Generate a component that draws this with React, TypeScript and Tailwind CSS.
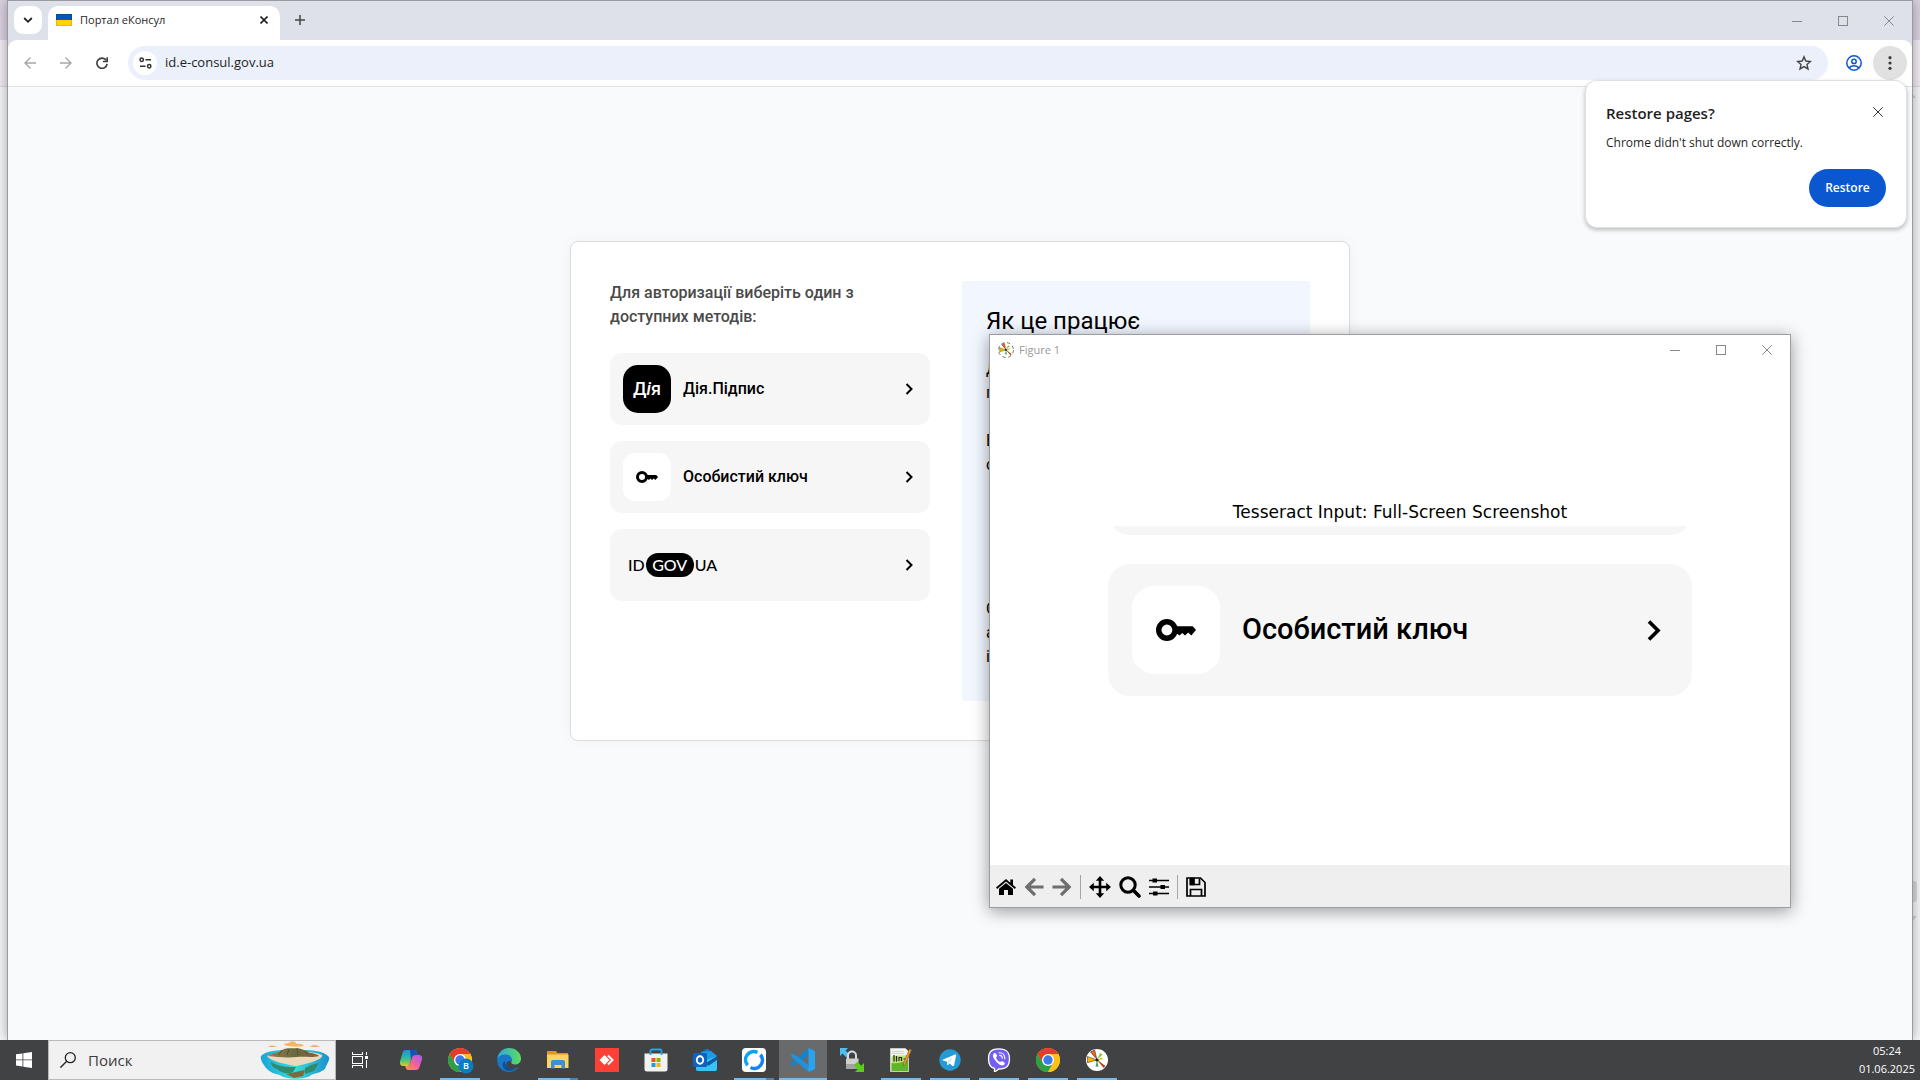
import React from "react";

type IconProps = { className?: string };

/* ---------- Small line icons ---------- */

const ChevronRight = ({ className = "" }: IconProps) => (
  <svg viewBox="0 0 16 16" className={className} fill="none" stroke="#000" strokeWidth="2">
    <path d="M5.500 3l5 5-5 5" />
  </svg>
);

const KeyIcon = ({ className = "" }: IconProps) => (
  <svg viewBox="0 0 22 12" className={className}>
    <circle cx="6" cy="6" r="4.5" fill="none" stroke="#000" strokeWidth="3" />
    <path d="M10.5 4H20.2L22 6l-2.6 3-1.7-1.6L16 9l-1.6-1.4L13 9l-1.4-1h-1z" fill="#000" />
  </svg>
);

const Minimize = () => (
  <svg viewBox="0 0 10 10" className="size-2.5" stroke="#888" shapeRendering="crispEdges">
    <path d="M0 5.5h10" />
  </svg>
);
const Maximize = () => (
  <svg viewBox="0 0 10 10" className="size-2.5" stroke="#888" fill="none" shapeRendering="crispEdges">
    <path d="M.5.5h9v9h-9z" />
  </svg>
);
const CloseIcon = ({ className = "" }: IconProps) => (
  <svg viewBox="0 0 10 10" className={className} stroke="currentColor" fill="none">
    <path d="M.3.3l9.4 9.4M9.7.3L.3 9.7" />
  </svg>
);

const WindowControls = () => (
  <div className="flex h-full">
    {[
      { label: "Minimize", icon: <Minimize /> },
      { label: "Maximize", icon: <Maximize /> },
      { label: "Close", icon: <CloseIcon className="size-2.5 text-[#888]" /> },
    ].map((c) => (
      <button key={c.label} aria-label={c.label} className="flex w-[46px] items-center justify-center">
        {c.icon}
      </button>
    ))}
  </div>
);

/* ---------- Browser ---------- */

const TabStrip = () => (
  <div className="flex h-[39px] items-end bg-[#dee1e9]">
    <button aria-label="Search tabs" className="mb-1.5 ml-1.5 flex size-7 items-center justify-center rounded-[9px] bg-white">
      <svg viewBox="0 0 10 10" className="size-2.5" fill="none" stroke="#222" strokeWidth="1.8">
        <path d="M1.2 3l3.8 3.8L8.8 3" />
      </svg>
    </button>
    <div className="ml-1.5 flex h-[34px] w-[232px] items-center rounded-t-[10px] bg-white pr-2.5 pb-1.5 pl-2">
      <svg viewBox="0 0 16 12" className="h-3 w-4 shrink-0">
        <path d="M0 0h16v6H0z" fill="#0057b8" />
        <path d="M0 6h16v6H0z" fill="#ffd500" />
        <path d="M.5.5h15v11H.5z" fill="none" stroke="#0000001c" />
      </svg>
      <span className="ml-2 flex-1 text-[11px] whitespace-nowrap text-[#1f1f1f]">Портал еКонсул</span>
      <button aria-label="Close tab" className="flex size-3 items-center justify-center">
        <svg viewBox="0 0 8 8" className="size-2" stroke="#222" strokeWidth="1.6">
          <path d="M.5.5l7 7M7.5.5l-7 7" />
        </svg>
      </button>
    </div>
    <button aria-label="New tab" className="mb-3.5 ml-3.5 flex size-3 items-center justify-center">
      <svg viewBox="0 0 10 10" className="size-2.5" stroke="#444" strokeWidth="1.5">
        <path d="M5 0v10M0 5h10" />
      </svg>
    </button>
    <div className="ml-auto h-full">
      <WindowControls />
    </div>
  </div>
);

const Toolbar = () => (
  <div className="bg-[#dee1e9]">
    <div className="flex h-[47px] items-center rounded-t-[9px] border-b border-[#dfe1e0] bg-white pr-[5px] pl-4">
      <div className="flex gap-6">
        <button aria-label="Back">
          <svg viewBox="0 0 12 12" className="size-3" fill="none" stroke="#a6a6a6" strokeWidth="1.4">
            <path d="M12 6H1M6.5.5L1 6l5.500 5.500" />
          </svg>
        </button>
        <button aria-label="Forward">
          <svg viewBox="0 0 12 12" className="size-3" fill="none" stroke="#a6a6a6" strokeWidth="1.4">
            <path d="M0 6h11M5.500.5L11 6l-5.500 5.500" />
          </svg>
        </button>
        <button aria-label="Reload">
          <svg viewBox="0 0 12 12" className="size-3" fill="none" stroke="#3c3c3c" strokeWidth="1.600">
            <path d="M10.200 3.300A5.100 5.100 0 1 0 11.100 6.800" />
            <path d="M11.200.2v4.300H6.900" />
          </svg>
        </button>
      </div>
      <div className="ml-5 flex h-[34px] flex-1 items-center rounded-full bg-[#ebf0fa] pr-4 pl-[5px]">
        <button aria-label="Site information" className="flex size-6 shrink-0 items-center justify-center rounded-full bg-white">
          <svg viewBox="0 0 13 12" className="h-3 w-[13px]" fill="none" stroke="#333" strokeWidth="1.500">
            <circle cx="2.700" cy="2.700" r="1.700" />
            <path d="M6.500 2.700H12M1 9.300h5.500" />
            <circle cx="10.200" cy="9.300" r="1.700" />
          </svg>
        </button>
        <input
          aria-label="Address"
          defaultValue="id.e-consul.gov.ua"
          className="ml-2 min-w-0 flex-1 bg-transparent text-[13px] text-[#1f1f1f] outline-none"
        />
        <button aria-label="Bookmark this tab">
          <svg viewBox="0 0 24 24" className="size-4" fill="none" stroke="#444" strokeWidth="2.100">
            <path d="M12 2.800l2.700 6.300 6.900.6-5.200 4.500 1.600 6.700-6-3.600-6 3.600 1.600-6.700-5.200-4.500 6.900-.6z" />
          </svg>
        </button>
      </div>
      <button aria-label="Profile" className="ml-[18px]">
        <svg viewBox="0 0 16 16" className="size-4" fill="none" stroke="#0b57d0" strokeWidth="1.500">
          <circle cx="8" cy="8" r="7.200" />
          <circle cx="8" cy="6.400" r="2.200" />
          <path d="M3.300 13c1-1.700 2.700-2.300 4.700-2.300s3.700.6 4.700 2.300" />
        </svg>
      </button>
      <button aria-label="Menu" className="ml-[11px] flex size-[34px] items-center justify-center rounded-full bg-[#e1e1e1]">
        <svg viewBox="0 0 4 14" className="h-3.5 w-1" fill="#3c3c3c">
          <circle cx="2" cy="1.700" r="1.600" />
          <circle cx="2" cy="7" r="1.600" />
          <circle cx="2" cy="12.300" r="1.600" />
        </svg>
      </button>
    </div>
  </div>
);

const MethodButton = ({ children }: { children: React.ReactNode }) => (
  <button className="flex h-[72px] items-center rounded-xl bg-[#f6f6f6] px-[13px] text-left text-base font-medium text-black">
    {children}
    <ChevronRight className="ml-auto size-4" />
  </button>
);

const LoginCard = () => (
  <main className="mx-auto mt-[154px] flex h-[500px] w-[780px] gap-8 rounded-lg border border-[#dcdcdc] bg-white p-[39px] font-[Roboto,sans-serif] shadow-[0_0_14px_rgba(0,0,0,0.04)]">
    <section className="flex w-80 flex-col gap-4">
      <p className="mb-2 text-base leading-6 font-medium text-[#4a4a4a]">Для авторизації виберіть один з доступних методів:</p>
      <MethodButton>
        <span className="mr-3 flex size-12 items-center justify-center rounded-[15px] bg-black text-lg font-medium text-white">
          Д<i>і</i>я
        </span>
        Дія.Підпис
      </MethodButton>
      <MethodButton>
        <span className="mr-3 flex size-12 items-center justify-center rounded-xl bg-white">
          <KeyIcon className="h-3 w-[22px]" />
        </span>
        Особистий ключ
      </MethodButton>
      <MethodButton>
        <span className="ml-[5px] flex items-center gap-px font-[Lato,sans-serif] text-base font-medium">
          ID
          <span className="flex h-6 w-12 items-center justify-center rounded-full bg-black text-white">GOV</span>
          UA
        </span>
      </MethodButton>
    </section>
    <section className="flex-1 rounded-[3px] bg-[#f1f6ff] p-6 text-base leading-6 text-black">
      <h1 className="text-2xl leading-8">Як це працює</h1>
      <p className="mt-5">
        Для входу
        <br />
        потрібно
      </p>
      <p className="mt-6">
        Виберіть
        <br />
        спосіб
      </p>
      <p className="mt-[120px]">
        Система
        <br />
        авторизує
        <br />і увійде
      </p>
    </section>
  </main>
);

const RestorePopup = () => (
  <div
    role="dialog"
    aria-labelledby="restore-title"
    className="absolute top-20 right-[13px] w-[322px] rounded-xl border border-[#dfe1e3] bg-white px-5 pt-[18px] pb-5 shadow-[0_2px_4px_rgba(0,0,0,0.25)]"
  >
    <div className="flex h-7 items-center justify-between">
      <h2 id="restore-title" className="text-[15px] font-semibold text-[#1f1f1f]">
        Restore pages?
      </h2>
      <button aria-label="Dismiss" className="mr-[3px] mb-0.5">
        <CloseIcon className="size-2.5 text-[#333]" />
      </button>
    </div>
    <p className="mt-1.5 text-xs leading-5 text-[#1f1f1f]">Chrome didn&apos;t shut down correctly.</p>
    <button className="mt-4 ml-auto block h-[38px] w-[77px] rounded-full bg-[#0b57d0] text-xs font-semibold text-white">Restore</button>
  </div>
);

const Browser = () => (
  <div className="absolute inset-x-[7px] top-0 bottom-0 flex flex-col border border-b-0 border-[#9a9b9f] bg-[#f8fafc] shadow-[0_0_12px_rgba(0,0,0,0.35)]">
    <TabStrip />
    <Toolbar />
    <LoginCard />
  </div>
);

/* ---------- Figure window ---------- */

const MplLogo = ({ className = "", dashed }: IconProps & { dashed?: boolean }) => (
  <svg viewBox="0 0 24 24" className={className}>
    {dashed ? (
      <circle cx="12" cy="12" r="11.200" fill="#fff" stroke="#555" strokeWidth="1.200" strokeDasharray="5 4" />
    ) : (
      <circle cx="12" cy="12" r="11" fill="#fff" />
    )}
    <path d="M12 12L5.500 4l4.200-2z" fill="#f4661b" />
    <path d="M12 12L2.500 8.500v6.200z" fill="#f5b800" />
    <path d="M12 12l3-7 2.500 1.500z" fill="#8bc34a" />
    <path d="M12 12l8.500 6-2 2z" fill="#d9531e" />
    <path d="M12 12l-1.500 6.500 3 .3z" fill="#3aa55c" />
    <path d="M12 12l5-2.500.7 2z" fill="#d4c400" />
    <path d="M5.500 4l14 15M5.500 4l4.200-2 2.300 10M2.500 8.500v6.200L12 12z" stroke="#222" strokeWidth=".5" fill="none" />
    <circle cx="12" cy="12" r="1.500" fill="#222" />
  </svg>
);

const HatchedArrow = ({ flip }: { flip?: boolean }) => (
  <svg viewBox="0 0 20 20" className="h-5 w-[19px]" fill="none" stroke="#6f6f6f" strokeWidth="3.400">
    {flip ? <path d="M.5 10h16M9.500 1.500L18 10l-8.500 8.500" /> : <path d="M19.500 10h-16M10.500 1.500L2 10l8.500 8.500" />}
  </svg>
);

const FigureToolbar = () => (
  <div className="flex h-[42px] items-center bg-[#efefef] pt-px pl-1.5">
    <button aria-label="Home">
      <svg viewBox="0 0 20 18" className="h-[18px] w-5">
        <path d="M10 1L0 9.600l1.200 1.300L10 3.600l8.800 7.300L20 9.600l-3-2.600V1.500h-2.700v3.200z" />
        <path d="M10 5L3 10.800V17h5v-5h4v5h5v-6.200z" />
      </svg>
    </button>
    <button aria-label="Previous view" className="ml-[9px]">
      <HatchedArrow />
    </button>
    <button aria-label="Next view" className="ml-2">
      <HatchedArrow flip />
    </button>
    <span className="ml-[9px] h-6 w-px bg-[#a5a5a5]" />
    <button aria-label="Pan" className="ml-2">
      <svg viewBox="0 0 22 22" className="size-[22px]">
        <path d="M11 3v16M3 11h16" stroke="#000" strokeWidth="2.600" />
        <path d="M11 0l4.200 4.800H6.800zM11 22l-4.200-4.800h8.400zM0 11l4.800-4.200v8.400zM22 11l-4.800 4.200V6.800z" />
      </svg>
    </button>
    <button aria-label="Zoom" className="ml-2">
      <svg viewBox="0 0 22 22" className="size-[22px]" fill="none" stroke="#000" strokeWidth="3">
        <circle cx="9" cy="9" r="7.200" />
        <path d="M14.300 14.300l5.700 5.700" strokeWidth="3.600" strokeLinecap="round" />
      </svg>
    </button>
    <button aria-label="Configure subplots" className="ml-2">
      <svg viewBox="0 0 20 18" className="h-[18px] w-5">
        <path d="M0 2.500h20M0 9h20M0 15.500h20" stroke="#000" strokeWidth="1.400" />
        <path d="M3.500.5h4.500v4h-4.500zM11.500 7h4.500v4h-4.500zM4 13.500h4.500v4H4z" />
      </svg>
    </button>
    <span className="ml-2 h-6 w-px bg-[#a5a5a5]" />
    <button aria-label="Save figure" className="ml-2">
      <svg viewBox="0 0 20 20" className="size-5" fill="none" stroke="#000" strokeWidth="1.700">
        <path d="M1 1h13.500L19 5.500V19H1z" />
        <path d="M4.500 19v-6.500h11V19" />
        <path d="M4.500 1.500v6h9v-6" />
        <path d="M4.500 1.500h3.500v6H4.500z" fill="#000" />
      </svg>
    </button>
  </div>
);

const FigureWindow = () => (
  <div className="absolute top-[334px] left-[989px] flex w-[802px] flex-col border border-[#9b9da0] bg-white shadow-[0_3px_16px_rgba(0,0,0,0.4)]">
    <div className="flex h-[30px] items-center pl-2">
      <MplLogo dashed className="size-4" />
      <span className="ml-[5px] flex-1 text-[11px] text-[#999]">Figure 1</span>
      <WindowControls />
    </div>
    <figure className="flex h-[500px] flex-col pr-[98px] pl-[118px]">
      <figcaption className="mt-[135px] text-center font-['DejaVu_Sans',sans-serif] text-[17px] leading-6 text-black">
        Tesseract Input: Full-Screen Screenshot
      </figcaption>
      <div className="mt-0.5 flex h-[9px] items-end overflow-hidden">
        <div className="h-[132px] flex-1 rounded-[22px] bg-[#f6f6f6]" />
      </div>
      <div className="mt-[29px] flex h-[132px] items-center rounded-[22px] bg-[#f6f6f6] px-6 font-[Roboto,sans-serif]">
        <div className="flex size-[88px] items-center justify-center rounded-[22px] bg-white">
          <KeyIcon className="h-[22px] w-10" />
        </div>
        <span className="ml-[22px] flex-1 text-[29px] font-medium text-black">Особистий ключ</span>
        <ChevronRight className="size-[29px]" />
      </div>
    </figure>
    <FigureToolbar />
  </div>
);

/* ---------- Taskbar ---------- */

const Island = () => (
  <svg viewBox="0 0 70 38" className="h-[38px] w-[70px]">
    <defs>
      <linearGradient id="sea" x1="0" x2="1">
        <stop offset="0" stopColor="#1aa3d9" />
        <stop offset=".5" stopColor="#35dfd6" />
        <stop offset="1" stopColor="#1b8fd0" />
      </linearGradient>
      <linearGradient id="hill" x1="0" x2="1">
        <stop offset="0" stopColor="#9a7a4c" />
        <stop offset=".5" stopColor="#6a6a40" />
        <stop offset="1" stopColor="#86603c" />
      </linearGradient>
    </defs>
    <path d="M24 4c2-3 5-1 6-3 3-2 6 0 7 2 4-1 6 1 7 2-6 1-14 1-20-1z" fill="#f6b765" />
    <path d="M8 6c2-2 5-2 9 0zM50 6c3-3 7-2 10 0z" fill="#f3ae78" />
    <path d="M1 15c6-6 18-6 34-6s28 0 34 7c1 4-3 8-4 12-5 4-9 4-14 6-5 5-25 5-31 0-6-1-10-3-14-7-3-4-6-8-5-12z" fill="url(#sea)" />
    <path d="M7 15c10-5 46-6 55-1 2 4-14 9-26 11C24 23 10 20 7 15z" fill="#ecd9bd" />
    <path d="M8 15c4-3 10-3 14-6 6-3 10-1 15-2 6 1 10 3 13 5 4 0 8 2 9 3-8 2-14 0-22 1-10 1-20 0-29-1z" fill="url(#hill)" />
    <path d="M22 9l-3 5M29 8l-2 6M37 8l1 6M45 10l2 4" stroke="#4c5632" />
    <path d="M11 21c8 5 18 5 25 5l-3 5c-6 3-13 0-16-3-4-1-6-4-6-7zM45 27l6-3 8-2-5 8-9 3z" fill="#2f8a70" />
    <path d="M26 33l19-4-2 6-9 2z" fill="#7a6a3c" />
  </svg>
);

const ChromeIcon = ({ badge }: { badge?: boolean }) => (
  <svg viewBox="0 0 24 24" className="size-6 overflow-visible">
    <circle cx="12" cy="12" r="12" fill="#fbc116" />
    <path d="M1.600 6A12 12 0 0 1 22.400 6H12L6.800 15z" fill="#e33b2e" />
    <path d="M1.600 6A12 12 0 0 0 12 24l5.200-9H6.800z" fill="#2c9f47" />
    <path d="M22.400 6A12 12 0 0 1 12 24l5.200-9a6 6 0 0 0-1-7.500L12 6z" fill="#fbc116" />
    <circle cx="12" cy="12" r="6" fill="#fff" />
    <circle cx="12" cy="12" r="4.700" fill="#3a7cec" />
    {badge && (
      <>
        <circle cx="18" cy="18" r="7.500" fill="#0a7cc4" />
        <text x="18" y="21.200" textAnchor="middle" fontSize="9" fontWeight="600" fill="#fff">
          B
        </text>
      </>
    )}
  </svg>
);

const CopilotIcon = () => (
  <svg viewBox="0 0 24 24" className="size-6">
    <defs>
      <linearGradient id="cpa" x1="0" y1="0" x2="0" y2="1">
        <stop offset="0" stopColor="#1c8fe8" />
        <stop offset=".6" stopColor="#3cc28a" />
        <stop offset="1" stopColor="#f0c419" />
      </linearGradient>
      <linearGradient id="cpb" x1="1" y1="0" x2="0" y2="1">
        <stop offset="0" stopColor="#a45cf5" />
        <stop offset=".5" stopColor="#ef5fa0" />
        <stop offset="1" stopColor="#ff9a4a" />
      </linearGradient>
    </defs>
    <path d="M7 2h8c2 0 2.500 1 3 3l.8 2h-2.500c-2 0-2.800 1-3.300 2.500L11 16c-.5 1.500-1.500 2-3 2H4c-2.500 0-3.500-2-3-4.500L3.500 5C4 3 5 2 7 2z" fill="url(#cpa)" />
    <path d="M17 22H9.500c-2 0-2.500-1-3-3L6 18h2c1.500 0 2.500-.5 3-2l2-6.500C13.500 8 14.500 7 16.500 7H20c2.500 0 3.500 2 3 4.500L20.500 19c-.5 2-1.500 3-3.500 3z" fill="url(#cpb)" />
    <path d="M11 2h4c2 0 2.500 1 3 3l.8 2h-2.500c-2 0-2.800 1-3.300 2.500L12 12z" fill="#1653b8" />
    <path d="M13 9.500L11 16c-.3.800-.7 1.300-1.200 1.600L11 12z" fill="#41434433" />
  </svg>
);

const EdgeIcon = () => (
  <svg viewBox="0 0 24 24" className="size-6">
    <defs>
      <linearGradient id="edg" x1="0" x2="1">
        <stop offset="0" stopColor="#2aa8e0" />
        <stop offset="1" stopColor="#5edc5a" />
      </linearGradient>
    </defs>
    <path d="M.2 11C1 4.500 6 0 12 0c7 0 12 5 12 10.500 0 4-3 6-6 6-3.500 0-4.500-1.500-3.500-3 1-2-.5-5-4-5S2 9 .2 11z" fill="url(#edg)" />
    <path d="M.2 11C2 7 6 6 9.500 6.500c4 .5 6 4 5 7-4-2-6.500 2-4.500 5.500C12 22 17 22 22 18.500 19 23 15 24 12 24 5 24-.5 18 .2 11z" fill="#1778c8" />
    <path d="M8 13c0 5 4 10 11 8-5 3-11 2.500-13-2-1-3 0-5 2-6z" fill="#0d4f9c" />
  </svg>
);

const ExplorerIcon = () => (
  <svg viewBox="0 0 24 24" className="size-6">
    <path d="M1 3h9l1.500 2H22v4H1z" fill="#d99a1c" />
    <path d="M1 6.500h21.500V20H1z" fill="#fcd462" />
    <path d="M5 20.500v-6.500a2 2 0 0 1 2-2h10a2 2 0 0 1 2 2v6.500h-3.500V17h-7v3.500z" fill="#3b8fd4" />
  </svg>
);

const AnyDeskIcon = () => (
  <svg viewBox="0 0 24 24" className="size-6">
    <path d="M0 0h24v24H0z" fill="#ff4035" />
    <path d="M9.500 7l5 5-5 5-5-5z" fill="#fff" />
    <path d="M13 7.500l4.500 4.500-4.500 4.500" fill="none" stroke="#fff" strokeWidth="2" />
  </svg>
);

const StoreIcon = () => (
  <svg viewBox="0 0 24 24" className="size-6">
    <path d="M.5 5.500h23V21a2.500 2.500 0 0 1-2.500 2.500H3A2.500 2.500 0 0 1 .5 21z" fill="#f2f2f2" />
    <path d="M6.500 7V3A1.500 1.500 0 0 1 8 1.500h8A1.500 1.500 0 0 1 17.500 3v4" fill="none" stroke="#27a4e3" strokeWidth="1.800" />
    <path d="M7.500 10h4v4h-4z" fill="#f1511b" />
    <path d="M12.500 10h4v4h-4z" fill="#80b900" />
    <path d="M7.500 15h4v4h-4z" fill="#1b9fe3" />
    <path d="M12.500 15h4v4h-4z" fill="#f9b500" />
  </svg>
);

const OutlookIcon = () => (
  <svg viewBox="0 0 24 24" className="size-6">
    <path d="M3 8l11-7.500L24 8v13a2 2 0 0 1-2 2H5a2 2 0 0 1-2-2z" fill="#1378c8" />
    <path d="M8 4l10-1 6 5-11 8z" fill="#1c9be6" />
    <path d="M3 16l21-8v13a2 2 0 0 1-2 2H5a2 2 0 0 1-2-2z" fill="#36c3f5" />
    <path d="M13 15l11-7v4l-9 6z" fill="#0c5aa8" />
    <rect y="5" width="14" height="14" rx="1.500" fill="#0f62bd" />
    <ellipse cx="7" cy="12" rx="3.200" ry="3.700" fill="none" stroke="#fff" strokeWidth="1.900" />
  </svg>
);

const RustDeskIcon = () => (
  <svg viewBox="0 0 24 24" className="size-6" fill="none">
    <rect width="24" height="24" rx="4" fill="#fff" />
    <path d="M15.500 4.500A8.200 8.200 0 0 0 5.600 17.200" stroke="#0aa2f5" strokeWidth="3.600" />
    <path d="M8.500 19.500A8.200 8.200 0 0 0 18.400 6.800" stroke="#1583f8" strokeWidth="3.600" />
  </svg>
);

const VsCodeIcon = () => (
  <svg viewBox="0 0 24 24" className="size-6">
    <path d="M17.500 0L0 15.500v1.500l2 1.500L18 6.500z" fill="#1684cc" />
    <path d="M17.500 24L0 8.500V7l2-1.500 16 12z" fill="#1f93dd" />
    <path d="M17.500 0L24 3v18l-6.500 3z" fill="#2aa3ee" />
  </svg>
);

const LockSyncIcon = () => (
  <svg viewBox="0 0 24 24" className="size-6">
    <path d="M0 0h8L5.500 2.500l4 4-3 3-4-4L0 8z" fill="#4fc1ee" />
    <path d="M8 11V7.500a4 4 0 0 1 8 0V11" fill="none" stroke="#dcdcdc" strokeWidth="2" />
    <path d="M6 10.500h12.500V21H6z" fill="#d0d0d0" />
    <path d="M6 16h12.500v5H6z" fill="#a4a4a4" />
    <path d="M24 24h-9l2.800-2.800-4-4 3.400-3.400 4 4L24 15z" fill="#5ccb1e" />
  </svg>
);

const NotesIcon = () => (
  <svg viewBox="0 0 24 24" className="size-6">
    <path d="M1.500.5h15l3 3v20h-18z" fill="#f5f5f0" stroke="#c9c9c9" />
    <path d="M3 3.500h12M3 5.500h12" stroke="#c4c9cc" strokeWidth=".8" />
    <path d="M2.500 8.500c5-1.500 10-.5 16.500-1.500v16H2.500z" fill="#b9e36a" />
    <path d="M2.500 15c6 1 11-1 16.500-3v11H2.500z" fill="#5fb52a" />
    <path d="M5 7v6.500M7.500 8v5.500M10 13V9.500h2.500V13M14.500 11H17" stroke="#222" strokeWidth="1.200" fill="none" />
    <path d="M20.500 1l2 1-6 14-2 2v-3z" fill="#e59a34" stroke="#8a5a20" strokeWidth=".6" />
  </svg>
);

const TelegramIcon = () => (
  <svg viewBox="0 0 24 24" className="size-6">
    <circle cx="12" cy="12" r="10.700" fill="#249bd7" />
    <path d="M4.500 11.800L17 6.500c.8-.3 1.300.1 1.100 1l-2 9.800c-.2.900-.8 1-1.500.6l-3-2.300-1.600 1.500c-.4.3-.8.200-.8-.4l-.2-3-3.900-1.200c-.7-.2-.8-.5-.6-.7z" fill="#fff" />
    <path d="M9.300 13.600l6.200-4.600-4.800 5.500-.5 2.500z" fill="#b9dcf0" />
  </svg>
);

const ViberIcon = () => (
  <svg viewBox="0 0 24 24" className="size-6">
    <path d="M12 .8c7 0 10.500 2.500 10.500 10S19 21 12 21l-4.500 3v-3.500C3 19.500 1.500 16.500 1.500 10.800 1.500 3.300 5 .8 12 .8z" fill="#7360f2" stroke="#fff" strokeWidth="1.300" />
    <path d="M7 5.500c1-.8 1.700-.3 2.500 1 .8 1.200.8 1.700-.2 2.600-.8 1.300 2.300 5 4 5 1-1 1.600-1.200 2.600-.5 2 1.200 2.400 1.800 1.500 2.900-1.400 1.700-3 1.200-5-.1-3-2-5-4.500-6.200-7.400C5.800 7.300 5.900 6.500 7 5.500z" fill="#fff" />
    <path d="M12 4.800c3.500 0 5.800 2.200 5.800 6M12.500 7.300c1.800.2 2.800 1.300 2.900 3" fill="none" stroke="#fff" strokeWidth="1.100" strokeLinecap="round" />
  </svg>
);

type Task = { name: string; icon: React.ReactNode; state?: "open" | "multi" | "active" };

const tasks: Task[] = [
  { name: "Copilot", icon: <CopilotIcon /> },
  { name: "Chrome profile B", icon: <ChromeIcon badge />, state: "open" },
  { name: "Edge", icon: <EdgeIcon /> },
  { name: "Explorer", icon: <ExplorerIcon />, state: "multi" },
  { name: "AnyDesk", icon: <AnyDeskIcon /> },
  { name: "Microsoft Store", icon: <StoreIcon /> },
  { name: "Outlook", icon: <OutlookIcon /> },
  { name: "RustDesk", icon: <RustDeskIcon />, state: "multi" },
  { name: "Visual Studio Code", icon: <VsCodeIcon />, state: "active" },
  { name: "WinSCP", icon: <LockSyncIcon /> },
  { name: "Notepad++", icon: <NotesIcon />, state: "open" },
  { name: "Telegram", icon: <TelegramIcon />, state: "open" },
  { name: "Viber", icon: <ViberIcon />, state: "open" },
  { name: "Chrome", icon: <ChromeIcon />, state: "open" },
  { name: "Figure 1", icon: <MplLogo className="size-6" />, state: "open" },
];

const TaskButton = ({ task }: { task: Task }) => (
  <button
    aria-label={task.name}
    className={`relative flex w-12 items-center justify-center ${task.state === "active" ? "bg-[#696a6b]" : ""}`}
  >
    {task.icon}
    {task.state && (
      <span className={`absolute bottom-0 flex h-0.5 ${task.state === "active" ? "inset-x-0" : "inset-x-1"}`}>
        <span className="flex-1 bg-[#76b9ed]" />
        {task.state === "multi" && <span className="w-2 bg-[#5683a8]" />}
      </span>
    )}
  </button>
);

const Taskbar = () => (
  <footer className="flex h-10 shrink-0 bg-[#414243]">
    <button aria-label="Start" className="flex w-12 items-center justify-center">
      <svg viewBox="0 0 16 16" className="size-4" fill="#fff">
        <path d="M0 2.300l6.500-.9v6.100H0zM7.300 1.300L16 0v7.500H7.300zM0 8.300h6.500v6.200L0 13.600zM7.300 8.300H16V16l-8.700-1.300z" />
      </svg>
    </button>
    <label className="flex w-72 items-center border border-[#b9b9b9] bg-[#f1f1f1] pr-[5px] pl-[11px]">
      <svg viewBox="0 0 16 16" className="size-4 shrink-0" fill="none" stroke="#222" strokeWidth="1.300">
        <circle cx="10.300" cy="5.700" r="5" />
        <path d="M6.700 9.300L.4 15.600" />
      </svg>
      <input aria-label="Поиск" placeholder="Поиск" className="ml-3 min-w-0 flex-1 bg-transparent text-[15px] outline-none placeholder:text-[#3b3b3b]" />
      <Island />
    </label>
    <button aria-label="Task view" className="mr-[3px] flex w-12 items-center justify-center">
      <svg viewBox="0 0 16 16" className="size-4" fill="none" stroke="#fff" shapeRendering="crispEdges">
        <path d="M.5 0v2.500h10V0M.5 4.500h10v7H.5zM.5 16v-2.500h10V16M14.500 0v3M14.500 8v8" />
        <path d="M13 4h3v3h-3z" fill="#fff" stroke="none" />
      </svg>
    </button>
    <nav className="flex gap-px">
      {tasks.map((t) => (
        <TaskButton key={t.name} task={t} />
      ))}
    </nav>
    <div className="mr-[5px] ml-auto flex flex-col justify-center text-center text-[11px] leading-[18px] text-white">
      <time>05:24</time>
      <time>01.06.2025</time>
    </div>
  </footer>
);

/* ---------- Desktop ---------- */

const BackWindow = () => (
  <div className="flex h-full flex-col bg-[#f8f8f8]">
    <div className="h-10 bg-[#dcd3e2]" />
    <div className="h-[47px] border-b border-[#ddd6de] bg-[#f3ecf6]" />
    <div className="flex flex-1 flex-col items-end">
      <svg viewBox="0 0 10 6" className="mt-[5px] mr-1 h-1.5 w-2.5" fill="#d4d4d4">
        <path d="M0 6l5-6 5 6z" />
      </svg>
      <span className="mt-auto mr-[3px] h-[21px] w-2.5 rounded-[3px] bg-[#dcdcdc]" />
      <svg viewBox="0 0 10 6" className="mt-3.5 mr-[3px] mb-[118px] h-1.5 w-2.5" fill="#d4d4d4">
        <path d="M0 0l5 6 5-6z" />
      </svg>
    </div>
  </div>
);

export default function App() {
  return (
    <div className="flex h-screen flex-col overflow-hidden font-['Open_Sans','Noto_Sans',sans-serif]">
      <div className="relative flex-1 overflow-hidden">
        <BackWindow />
        <Browser />
        <RestorePopup />
        <FigureWindow />
      </div>
      <Taskbar />
    </div>
  );
}
